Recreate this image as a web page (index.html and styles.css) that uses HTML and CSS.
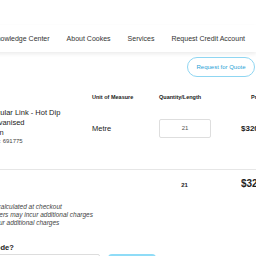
FILE: index.html
```html
<!DOCTYPE html>
<html lang="en">
<head>
    <meta charset="UTF-8" />
    <title>Cart</title>
    <link rel="stylesheet" href="styles.css">
</head>
<body>

<!-- Header -->
<div class="topbar"></div>
<nav class="mainnav">
    <a href="#">Knowledge Center</a>
    <a href="#">About Cookes</a>
    <a href="#">Services</a>
    <a href="#">Request Credit Account</a>
</nav>

<main>
    <div class="quote-row">
        <button class="btn-quote">Request for Quote</button>
    </div>

    <!-- Cart table -->
    <div class="cart">
        <div class="cart-head">
            <div></div>
            <div>Unit of Measure</div>
            <div>Quantity/Length</div>
            <div class="price">Price</div>
        </div>
        <div class="cart-row">
            <div class="product">
                <p class="name">Circular Link - Hot Dip Galvanised</p>
                <p class="sub">Plain</p>
                <p class="sku">SKU: 691775</p>
            </div>
            <div class="cell">Metre</div>
            <div class="cell"><input class="qty" type="text" value="21"></div>
            <div class="cell price">$320.25</div>
        </div>
        <div class="cart-total">
            <div></div>
            <div></div>
            <div class="total-qty">21</div>
            <div class="total-price price">$320.25</div>
        </div>
    </div>

    <div class="notes">
        <p>Freight calculated at checkout</p>
        <p>Bulk orders may incur additional charges</p>
        <p>Cuts incur additional charges</p>
    </div>

    <div class="promo">
        <h4>Have a promo code?</h4>
        <div class="promo-row">
            <input class="promo-input" type="text">
            <button class="btn-apply">Apply</button>
        </div>
    </div>
</main>

</body>
</html>
```

FILE: styles.css
```css
body {
    font-family: "Liberation Sans", Arial, sans-serif;
    background: #fff;
    color: #222;
    margin: 0;
    padding: 0;
    overflow: hidden;
}

.topbar {
    height: 25px;
    background: #fff;
}

.mainnav {
    height: 27px;
    display: flex;
    align-items: center;
    gap: 17px;
    margin-left: -8px;
    background: #fff;
    box-shadow: 0 2px 4px rgba(0, 0, 0, 0.08);
    position: relative;
}

.mainnav a {
    text-decoration: none;
    color: #333;
    font-size: 7px;
    white-space: nowrap;
}

.quote-row {
    display: flex;
    justify-content: flex-end;
    padding: 5px 1px 0 0;
}

.btn-quote {
    width: 68px;
    height: 20px;
    border: 1px solid #8fd6f2;
    border-radius: 10px;
    background: #fff;
    color: #2a9fd6;
    font-family: inherit;
    font-size: 6px;
    padding: 0;
}

.cart {
    margin-left: -13px;
    width: 400px;
}

.cart-head,
.cart-row,
.cart-total {
    display: grid;
    grid-template-columns: 105px 67px 54px 1fr;
}

.cart-head {
    margin-top: 16px;
    font-size: 5.5px;
    font-weight: bold;
    line-height: 8px;
    color: #222;
}

.cart-row .price,
.cart-total .price {
    padding-left: 28px;
}

.cart-head .price {
    padding-left: 38px;
}

.cart-row {
    padding: 7px 0 21px;
    border-bottom: 1px solid #e6e6e6;
    font-size: 7.5px;
}

.product p {
    margin: 0;
}

.name {
    width: 82px;
    line-height: 10px;
}

.sub {
    line-height: 9px;
}

.sku {
    font-size: 6px;
    line-height: 9px;
    color: #444;
}

.cell {
    display: flex;
    align-items: center;
    height: 40px;
}

.cart-row .price {
    font-weight: bold;
    font-size: 8px;
}

.qty {
    width: 52px;
    height: 19px;
    box-sizing: border-box;
    border: 1px solid #dedede;
    border-radius: 2px;
    text-align: center;
    font-family: inherit;
    font-size: 6px;
    color: #555;
    padding: 0;
}

.cart-total {
    height: 30px;
    align-items: center;
}

.total-qty {
    font-size: 6px;
    font-weight: bold;
    text-align: center;
    padding-right: 3px;
}

.total-price {
    font-size: 10px;
    font-weight: bold;
    margin-top: -3px;
}

.notes {
    margin-left: -24.5px;
    padding-top: 3px;
}

.notes p {
    margin: 0;
    font-size: 6.5px;
    line-height: 8px;
    font-style: italic;
    color: #444;
}

.promo {
    margin-left: -60px;
    padding-top: 16px;
}

.promo h4 {
    margin: 0;
    font-size: 7.5px;
    line-height: 10px;
}

.promo-row {
    display: flex;
    gap: 8px;
    margin-top: 1px;
}

.promo-input {
    width: 160px;
    height: 20px;
    box-sizing: border-box;
    border: 1px solid #ddd;
    border-radius: 2px;
}

.btn-apply {
    width: 48px;
    height: 20px;
    border: 2px solid #8fdcf7;
    border-radius: 4px;
    background: #fff;
    color: #2a9fd6;
}
```
